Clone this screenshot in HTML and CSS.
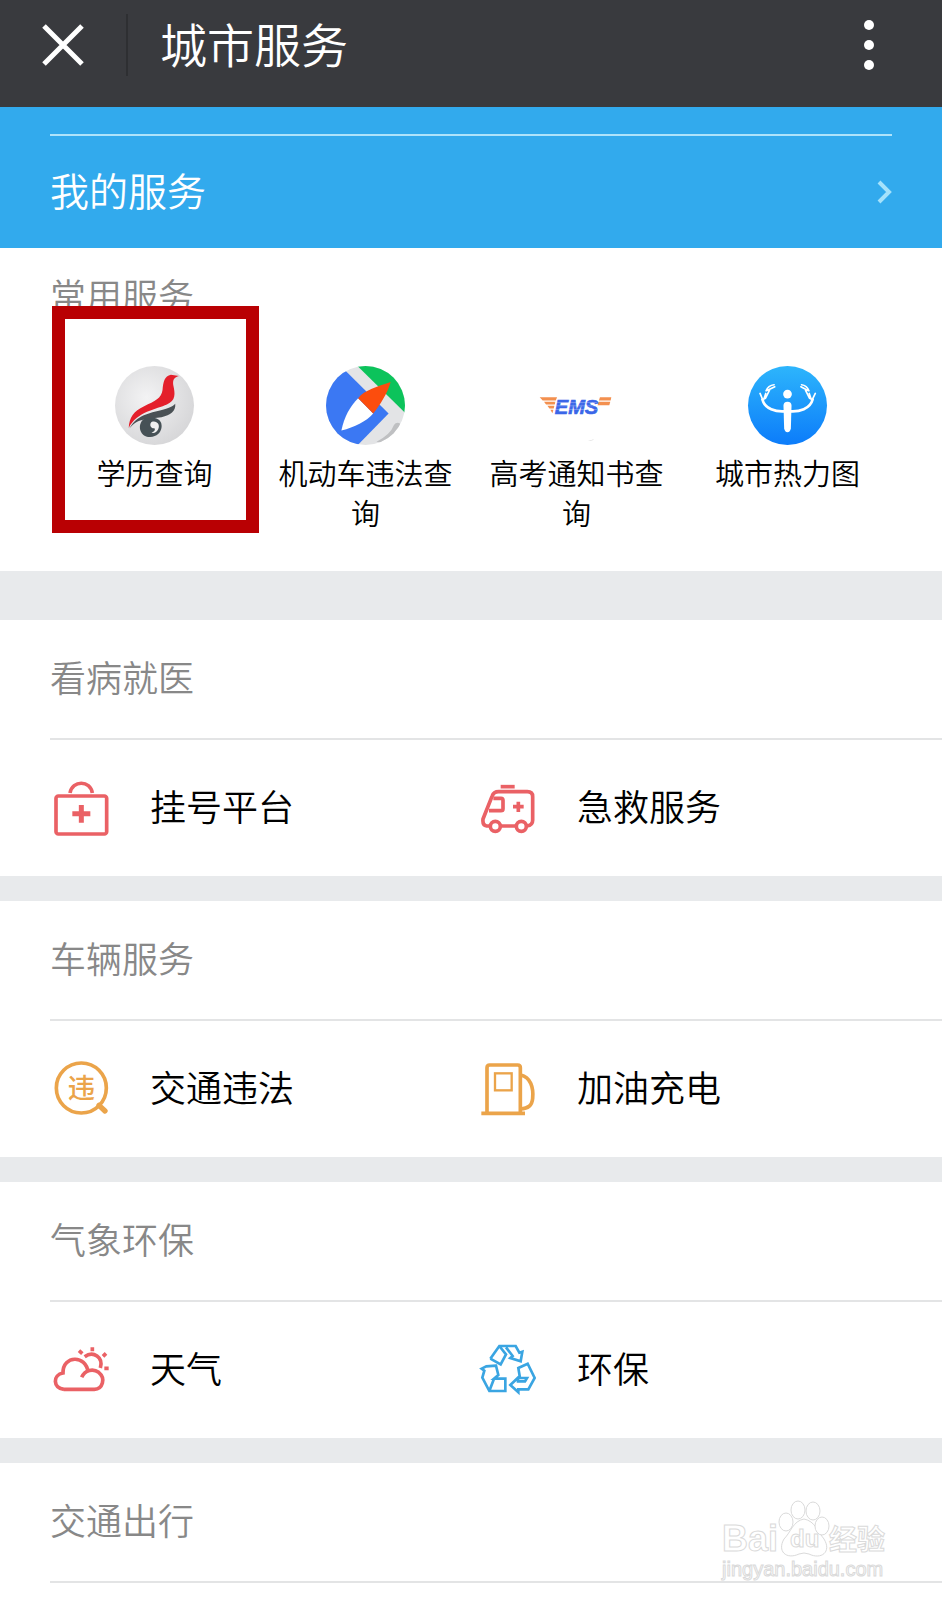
FILE: index.html
```html
<!DOCTYPE html>
<html lang="zh-CN">
<head>
  <meta charset="UTF-8" />
  <meta name="viewport" content="width=device-width, initial-scale=1.0" />
  <title>城市服务</title>
  <link rel="stylesheet" href="styles.css">
</head>
<body>
  <header class="topbar">
    <button type="button" class="close" aria-label="关闭">
      <svg viewBox="0 0 42 42"><path d="M2 2L40 40M40 2L2 40" fill="none" stroke="#fff" stroke-width="5"/></svg>
    </button>
    <h1>城市服务</h1>
    <button type="button" class="more" aria-label="更多">
      <svg viewBox="0 0 10 50"><g fill="#fff"><circle cx="5" cy="5" r="5"/><circle cx="5" cy="25" r="5"/><circle cx="5" cy="45" r="5"/></g></svg>
    </button>
  </header>

  <nav class="mine">
    <a href="#">
      <span>我的服务</span>
      <svg viewBox="0 0 15 24"><path d="M2 2L12 12L2 22" fill="none" stroke="#a5e2fb" stroke-width="4"/></svg>
    </a>
  </nav>

  <main>
    <section class="common">
      <h2>常用服务</h2>
      <div class="shortcuts">
        <a href="#" class="shortcut marked">
          <svg viewBox="225 288 236 236">
            <defs>
              <radialGradient id="silver" cx=".4" cy=".4" r=".65"><stop offset="0" stop-color="#f3f3f4"/><stop offset="1" stop-color="#d6d6d8"/></radialGradient>
            </defs>
            <circle cx="343" cy="406" r="118" fill="url(#silver)"/>
            <path d="M266 473C268 440 280 424 312 408C344 394 364 384 367 360C369 335 373 318 392 314L416 318C402 322 397 328 399 345C405 372 407 391 380 403C350 417 290 424 266 473Z" fill="#e41f2b"/>
            <path d="M268 475C290 434 330 428 362 420C386 414 397 410 405 401C407 424 391 435 364 441C330 447 293 441 268 475Z" fill="#4a5155"/>
            <path d="M316 443C290 455 294 500 330 500C350 500 362 487 364 472C366 456 358 446 344 443Z" fill="#465156"/>
            <path d="M334 455C350 450 361 463 354 477C350 486 341 490 334 487C343 485 346 479 343 474C333 476 326 463 334 455Z" fill="#f0f0f0"/>
          </svg>
          <span>学历查询</span>
        </a>
        <a href="#" class="shortcut">
          <svg viewBox="861 288 236 236">
            <defs><clipPath id="disc"><circle cx="979" cy="406" r="118"/></clipPath></defs>
            <g clip-path="url(#disc)">
              <path d="M861 288H1097V524H861Z" fill="#e3e4e6"/>
              <path d="M861 250L905 288L1048 430L956 524H861Z" fill="#3b78f3"/>
              <path d="M955 288H1097V428Z" fill="#0cc35b"/>
              <path d="M1012 514Q1054 492 1064 464Q1072 453 1084 461L1060 524Z" fill="#bfc0c2"/>
              <path d="M907 481C915 440 932 410 957 384L1002 430C980 455 947 470 907 481Z" fill="#fff"/>
              <path d="M957 384C976 360 1015 350 1054 336C1046 367 1022 406 1002 430Z" fill="#fc4d0d"/>
            </g>
          </svg>
          <span>机动车违法查询</span>
        </a>
        <a href="#" class="shortcut">
          <svg viewBox="233 78 236 236">
            <path d="M241 171H293L289 181H250ZM254 185H288L286 193H260ZM264 197H285L283 205H270ZM273 209H282L279 219Z" fill="#f3904f"/>
            <path d="M421 171H455L453 181H418ZM417 185H452L449 195H414Z" fill="#f3904f"/>
            <text x="286" y="220" class="ems">EMS</text>
            <path d="M286 187H412M284 197H412M282 208H412" stroke="#fff" stroke-width="2" opacity=".4"/>
            <path d="M385 300Q398 304 404 296Q396 300 385 300Z" fill="#ddd"/>
          </svg>
          <span>高考通知书查询</span>
        </a>
        <a href="#" class="shortcut">
          <svg viewBox="865 78 236 236">
            <defs>
              <linearGradient id="sky" x2="0" y2="1"><stop offset="0" stop-color="#2db5fc"/><stop offset="1" stop-color="#0c7cfa"/></linearGradient>
            </defs>
            <circle cx="983" cy="196" r="118" fill="url(#sky)"/>
            <circle cx="983" cy="162" r="13" fill="#fff"/>
            <path d="M971 197A12 12 0 0 1 995 197L993 265Q991 276 983 276Q975 276 973 265Z" fill="#fff"/>
            <g fill="none" stroke="#fff" stroke-linecap="round">
              <path d="M978 213C948 216 915 206 908 178M988 213C1018 216 1051 206 1058 178" stroke-width="8"/>
              <path d="M910 181L901 160M912 178L918 160M917 175L929 151M919 152Q925 136 943 134M922 151L945 140M1056 181L1066 160M1054 178L1048 160M1049 175L1037 151M1047 152Q1041 136 1025 134M1044 151L1023 140" stroke-width="5"/>
            </g>
          </svg>
          <span>城市热力图</span>
        </a>
      </div>
    </section>

    <section class="group">
      <h2>看病就医</h2>
      <div class="links">
        <a href="#">
          <svg viewBox="42 423 162 162" class="red">
            <rect x="48" y="468" width="152" height="114" rx="7"/>
            <path d="M90 459C97 420 151 420 157 459"/>
            <path d="M124 495V548M97 521H151" stroke-width="15"/>
          </svg>
          <span>挂号平台</span>
        </a>
        <a href="#">
          <svg viewBox="63 63 162 162" class="red">
            <path d="M90 198H80Q67 196 69 177L96 109Q101 95 116 95H202Q218 95 218 110V181Q218 196 201 198M122 198H167"/>
            <path d="M122 80H164"/>
            <path d="M100 115H123Q129 115 129 121V146Q129 152 123 152H87"/>
            <circle cx="106" cy="199" r="15"/><circle cx="184" cy="199" r="15"/>
            <path d="M175 125V156M159 140H191"/>
          </svg>
          <span>急救服务</span>
        </a>
      </div>
    </section>

    <section class="group">
      <h2>车辆服务</h2>
      <div class="links">
        <a href="#">
          <svg viewBox="42 96 162 162" class="orange">
            <circle cx="124" cy="174" r="75"/>
            <path d="M177 226L195 243" stroke-width="16" stroke-linecap="round"/>
            <text x="83" y="204" class="wei">违</text>
          </svg>
          <span>交通违法</span>
        </a>
        <a href="#">
          <svg viewBox="63 96 162 162" class="orange">
            <path d="M81 249V113Q81 105 89 105H173Q181 105 181 113V249"/>
            <path d="M64 250H195"/>
            <rect x="105" y="130" width="50" height="51" stroke-width="7"/>
            <path d="M182 135C212 141 221 174 218 205C216 228 204 235 182 237"/>
          </svg>
          <span>加油充电</span>
        </a>
      </div>
    </section>

    <section class="group">
      <h2>气象环保</h2>
      <div class="links">
        <a href="#">
          <svg viewBox="42 69 162 162" class="red">
            <path d="M72 208C38 205 38 164 69 159C68 105 139 104 144 156M125 172C135 149 160 145 176 157C198 175 188 207 163 208H72"/>
            <path d="M134 110C160 91 191 112 181 144"/>
            <path d="M157 82V94M117 92L127 101M198 100L189 109M193 145H206"/>
          </svg>
          <span>天气</span>
        </a>
        <a href="#">
          <svg viewBox="63 69 162 162" class="blue">
            <path d="M91 116L118 78H167L178 98L187 95L182 124L151 114L158 108L138 82M118 78L138 103L122 133L91 116"/>
            <path d="M108 137L79 139L65 146L73 152L67 173L88 213H136V176H102L115 165ZM88 213L102 176"/>
            <path d="M175 144L203 131L224 174L205 208H175V217L151 195L174 173V184H195L201 174H180Z"/>
          </svg>
          <span>环保</span>
        </a>
      </div>
    </section>

    <section class="group">
      <h2>交通出行</h2>
      <svg class="watermark" viewBox="0 0 176 90">
        <text x="2" y="54" class="brand">Bai</text>
        <path d="M63 47C70 40 72 29 83 27C94 29 97 40 103 47C111 60 100 68 88 62Q83 60 78 62C65 68 56 59 63 47Z" transform="translate(1 -5)"/>
        <ellipse cx="66" cy="25" rx="7" ry="9"/>
        <ellipse cx="78" cy="13" rx="7" ry="9"/>
        <ellipse cx="93" cy="14" rx="7" ry="9"/>
        <ellipse cx="102" cy="29" rx="7" ry="9"/>
        <text x="70" y="50" class="du">du</text>
        <text x="109" y="53" class="cn">经验</text>
        <text x="2" y="79" class="url">jingyan.baidu.com</text>
      </svg>
    </section>
  </main>
</body>
</html>
```
FILE: styles.css
```css
* {
  box-sizing: border-box;
}

body {
  margin: 0;
  background: #fff;
  font-family: "Noto Sans CJK SC", sans-serif;
  font-weight: 350;
  color: #000;
}

h1, h2 {
  margin: 0;
  font-weight: 350;
}

a {
  color: inherit;
  text-decoration: none;
}

button {
  padding: 0;
  border: none;
  background: none;
  cursor: pointer;
}

svg {
  display: block;
  flex: none;
  overflow: visible;
}

.topbar {
  display: flex;
  align-items: center;
  height: 107px;
  padding: 0 68px 18px 42px;
  background: #393a3e;
  color: #fff;
}

.close {
  padding: 10px 42px 10px 0;
  border-right: 2px solid #2e2f32;
}

.close svg {
  width: 42px;
}

.topbar h1 {
  flex: 1;
  padding: 0 0 4px 32px;
  font-size: 47px;
  line-height: 60px;
}

.more svg {
  width: 10px;
}

.mine {
  padding: 27px 50px 0;
  background: #32aaed;
  color: #fff;
}

.mine a {
  display: flex;
  align-items: center;
  justify-content: space-between;
  height: 114px;
  border-top: 2px solid #aee3fb;
  font-size: 39px;
}

.mine span,
.links span {
  padding-bottom: 6px;
}

.mine svg {
  width: 15px;
}

h2 {
  font-size: 36px;
  color: #888;
}

.common {
  padding-bottom: 39px;
}

.common h2 {
  padding: 0 0 6px 50px;
  line-height: 92px;
}

.shortcuts {
  display: grid;
  grid-template-columns: repeat(4, 1fr);
  padding: 20px 49px 0;
}

.shortcut {
  position: relative;
  display: flex;
  flex-direction: column;
  align-items: center;
  gap: 7px;
  padding: 0 12px;
  font-size: 29px;
  line-height: 40px;
  text-align: center;
}

.shortcut svg {
  width: 79px;
}

/* red frame around the highlighted service */
.marked::after {
  content: "";
  position: absolute;
  top: -60px;
  right: 1px;
  bottom: -1px;
  left: 3px;
  border: 13px solid #b90003;
}

.ems {
  font: italic bold 60px "Liberation Sans", sans-serif;
  fill: #3a66e8;
  stroke: #3a66e8;
  stroke-width: 2;
}

.group {
  position: relative;
  border-top: 25px solid #e8eaec;
}

.common + .group {
  border-top-width: 49px;
}

.group h2 {
  margin-left: 50px;
  padding-bottom: 6px;
  border-bottom: 2px solid #e3e4e5;
  line-height: 112px;
}

.links {
  display: grid;
  grid-template-columns: 1fr 1fr;
  padding: 0 34px 0 54px;
}

.links a {
  display: flex;
  align-items: center;
  gap: 42px;
  height: 136px;
  font-size: 36px;
}

.links svg {
  width: 54px;
  fill: none;
  stroke-width: 11;
}

.red {
  stroke: #ea6165;
}

.orange {
  stroke: #eba44a;
}

.blue {
  stroke: #3aa5e2;
}

.links .blue {
  stroke-width: 8;
}

.wei {
  font-size: 82px;
  font-weight: 500;
  fill: #eba44a;
  stroke: none;
}

.watermark {
  position: absolute;
  top: 34px;
  right: 46px;
  width: 176px;
  fill: #fff;
  stroke: #dadada;
}

.watermark text {
  font-family: "Liberation Sans", "Noto Sans CJK SC", sans-serif;
  font-weight: bold;
}

.watermark .brand {
  font-size: 36px;
}

.watermark .du {
  font-size: 24px;
}

.watermark .cn {
  font-size: 28px;
}

.watermark .url {
  font-size: 20px;
  font-weight: 400;
}
```
